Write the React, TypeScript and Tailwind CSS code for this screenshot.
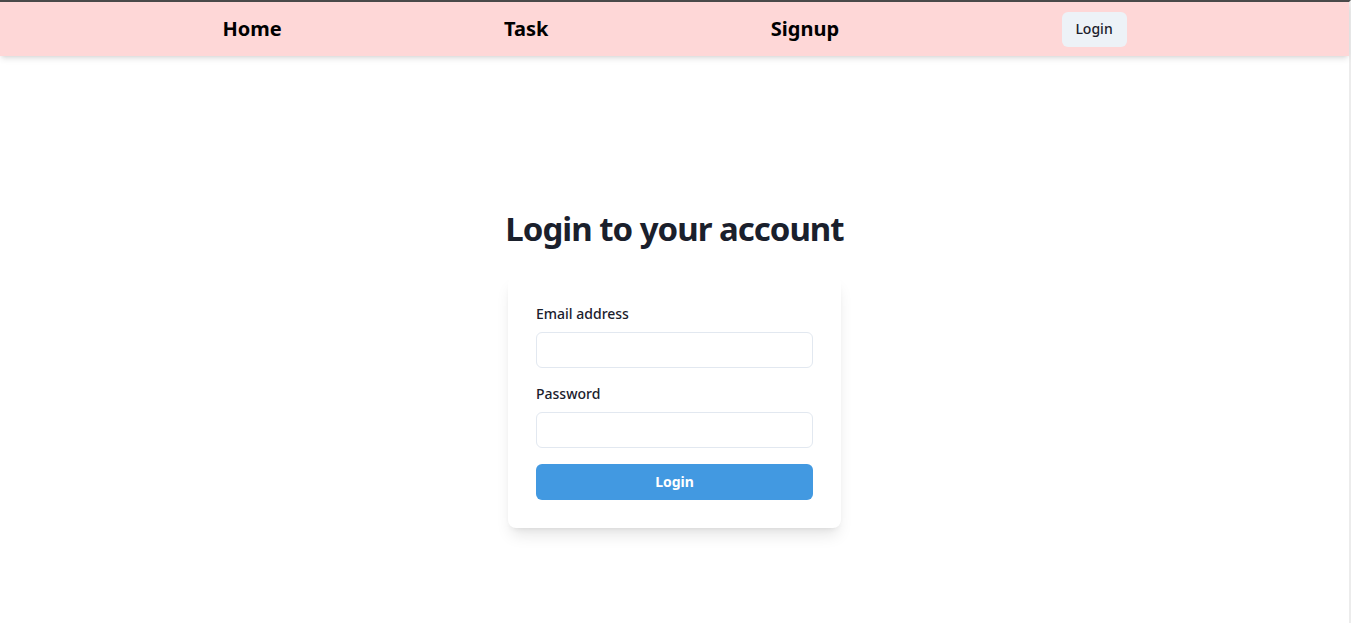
import React from "react";

const font = { fontFamily: '"Noto Sans", "Open Sans", sans-serif' };

function NavBar() {
  return (
    <nav className="flex h-[54px] items-center justify-evenly bg-[#fed7d7] shadow-md">
      <a href="#" className="text-xl font-bold text-black">Home</a>
      <a href="#" className="text-xl font-bold text-black">Task</a>
      <a href="#" className="text-xl font-bold text-black">Signup</a>
      <button
        type="button"
        className="flex h-[35px] w-[65px] items-center justify-center rounded-md bg-[#edf2f7] text-sm font-medium text-[#1a202c]"
      >
        Login
      </button>
    </nav>
  );
}

function Field({ label, type }: { label: string; type: string }) {
  return (
    <div className="flex flex-col">
      <label className="mb-2 text-sm leading-5 font-medium text-[#1a202c]">{label}</label>
      <input
        type={type}
        className="h-9 w-full rounded-md border border-[#e2e8f0] bg-white px-3 text-sm outline-none"
      />
    </div>
  );
}

export default function App() {
  return (
    <div className="min-h-screen border-t-2 border-r-2 border-t-[#4a4a4a] border-r-[#ececec] bg-white" style={font}>
      <NavBar />
      <main className="flex flex-col items-center pt-[153px]">
        <h1 className="text-[33px] leading-[1.2] font-bold tracking-[-1px] whitespace-nowrap text-[#1a202c]">
          Login to your account
        </h1>
        <div className="mt-[27px] flex w-[333px] flex-col gap-4 rounded-lg bg-white p-7 shadow-lg">
          <Field label="Email address" type="email" />
          <Field label="Password" type="password" />
          <button
            type="button"
            className="h-9 w-full rounded-md bg-[#4299e1] text-sm font-bold text-white"
          >
            Login
          </button>
        </div>
      </main>
    </div>
  );
}
